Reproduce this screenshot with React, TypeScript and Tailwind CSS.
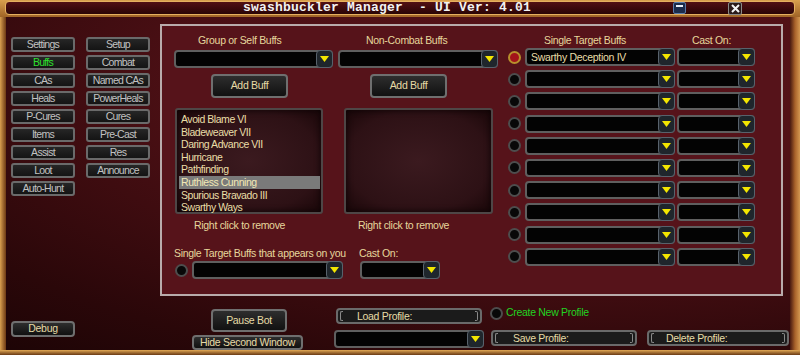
// Bot manager window — swashbuckler profile, Buffs tab
import React from "react";

const navLeft = ["Settings", "Buffs", "CAs", "Heals", "P-Cures", "Items", "Assist", "Loot", "Auto-Hunt"];
const navRight = ["Setup", "Combat", "Named CAs", "PowerHeals", "Cures", "Pre-Cast", "Res", "Announce"];

const groupBuffs = [
  "Avoid Blame VI",
  "Bladeweaver VII",
  "Daring Advance VII",
  "Hurricane",
  "Pathfinding",
  "Ruthless Cunning",
  "Spurious Bravado III",
  "Swarthy Ways",
];

const singleTargets = ["Swarthy Deception IV", "", "", "", "", "", "", "", "", ""];

const label = "text-[10.5px] leading-[12px] tracking-[-0.3px] text-[#e6d79c]";

function Tri() {
  return (
    <svg width="9" height="6" viewBox="0 0 9 6">
      <polygon points="0,0 9,0 4.5,6" fill="#f3e600" />
    </svg>
  );
}

function Drop({ className = "", text }: { className?: string; text?: string }) {
  return (
    <div className={`flex h-[18px] shrink-0 items-stretch rounded-[4px] border-2 border-[#5f5f5f] bg-[#030303] ${className}`}>
      <span className="flex-1 truncate pl-[4px] text-[10.5px] leading-[14px] tracking-[-0.3px] text-[#eadfa8]">{text}</span>
      <span className="-my-[2px] -mr-[2px] flex w-[17px] items-center justify-center rounded-[4px] border border-[#58626c] bg-[#1f262c]">
        <Tri />
      </span>
    </div>
  );
}

function Radio({ on }: { on?: boolean }) {
  return (
    <span
      className={`h-[13px] w-[13px] shrink-0 rounded-full border-2 ${
        on ? "border-[#b8902c] bg-[#a3141a]" : "border-[#4d4d4d] bg-[#080808]"
      }`}
    />
  );
}

function Btn({ className = "", children }: { className?: string; children: React.ReactNode }) {
  return (
    <div
      className={`flex shrink-0 items-center justify-center rounded-[4px] border-2 border-[#6f6f6f] bg-gradient-to-b from-[#2e2e2e] to-[#111111] text-[10.5px] tracking-[-0.3px] text-[#e6dba6] ${className}`}
    >
      {children}
    </div>
  );
}

function NavBtn({ label, active }: { label: string; active?: boolean }) {
  return (
    <div
      className={`flex h-[15px] items-center justify-center rounded-[3px] border-2 border-[#6a6a6a] bg-gradient-to-b from-[#262626] to-[#141414] text-[10.5px] tracking-[-0.7px] ${
        active ? "text-[#2ee02e]" : "text-[#c2c2c2]"
      }`}
    >
      {label}
    </div>
  );
}

function ProfileBtn({ className = "", label, pad }: { className?: string; label: string; pad: string }) {
  return (
    <div className={`flex h-[16px] shrink-0 items-stretch rounded-[4px] border-2 border-[#6a6a6a] bg-[#1b1b1b] ${className}`}>
      <span className="my-[1px] ml-[2px] w-[3px] rounded-l-[2px] border-y border-l border-[#8a8a8a]" />
      <span className={`flex-1 text-[10.5px] leading-[12px] tracking-[-0.3px] text-[#e6dba6] ${pad}`}>{label}</span>
      <span className="my-[1px] mr-[2px] w-[3px] rounded-r-[2px] border-y border-r border-[#8a8a8a]" />
    </div>
  );
}

function ListBox({ className = "", items, selected }: { className?: string; items: string[]; selected?: string }) {
  return (
    <div
      className={`h-[106px] shrink-0 rounded-[3px] border-2 border-[#4e4646] bg-[radial-gradient(ellipse_at_center,#3b1a1f_0%,#2d1115_70%,#1a0709_100%)] pl-[2px] pr-[1px] pt-[3px] shadow-[inset_0_0_6px_#0c0304] ${className}`}
    >
      {items.map((it) => (
        <div
          key={it}
          className={`h-[12.6px] pl-[2px] text-[10.5px] leading-[12.6px] tracking-[-0.45px] ${
            it === selected ? "bg-[#7a7a7a] text-[#f2e9b6]" : "text-[#eadfa8]"
          }`}
        >
          {it}
        </div>
      ))}
    </div>
  );
}

export default function App() {
  return (
    <div className="flex h-[355px] w-[800px] flex-col overflow-hidden bg-[#b57b32] [font-family:'Liberation_Sans',Arial,sans-serif]">
      {/* Title bar */}
      <div className="h-[17px] shrink-0 bg-gradient-to-b from-[#d9a04e] to-[#a06426] px-[5px] pb-[2px] pt-[1px]">
        <div className="flex h-[14px] items-center rounded-[4px] border border-[#e6b060] bg-gradient-to-b from-[#521014] to-[#2a0506] pl-[237px] pr-[52px]">
          <span className="whitespace-pre font-bold text-[13px] leading-[14px] tracking-[0.2px] text-[#f2f2f2] [font-family:'Liberation_Mono',monospace]">
            swashbuckler Manager  - UI Ver: 4.01
          </span>
          <span className="flex-1" />
          <span className="flex h-[12px] w-[13px] items-start justify-center rounded-[2px] border border-[#5a7aa8] bg-[#1c2c4c] pt-[2px]">
            <span className="h-[2px] w-[7px] bg-[#e8eef8]" />
          </span>
          <span className="ml-[42px] flex h-[13px] w-[14px] items-center justify-center rounded-[2px] border border-[#8a8a8a] bg-[#2a1a1a]">
            <svg width="9" height="9" viewBox="0 0 9 9">
              <path d="M1 1 L8 8 M8 1 L1 8" stroke="#f4f4f4" strokeWidth="2" />
            </svg>
          </span>
        </div>
      </div>

      {/* Middle */}
      <div className="flex min-h-0 flex-1">
        <div className="w-[6px] shrink-0 bg-gradient-to-r from-[#d9a050] to-[#6e3a14]" />

        <div className="flex min-w-0 flex-1 bg-[radial-gradient(ellipse_120%_110%_at_75%_20%,#5c141a_0%,#4a0f14_45%,#2a0709_80%,#1a0405_100%)]">
          {/* Left nav */}
          <div className="flex w-[154px] shrink-0 flex-col pb-[13px] pl-[5px] pt-[20px]">
            <div className="grid grid-cols-[64px_64px] grid-rows-[repeat(9,15px)] grid-flow-col gap-x-[11px] gap-y-[3px]">
              {navLeft.map((n) => (
                <NavBtn key={n} label={n} active={n === "Buffs"} />
              ))}
              {navRight.map((n) => (
                <NavBtn key={n} label={n} />
              ))}
            </div>
            <Btn className="mt-auto h-[16px] w-[64px] rounded-[3px]">Debug</Btn>
          </div>

          {/* Right side */}
          <div className="flex min-w-0 flex-1 flex-col">
            {/* Inner panel */}
            <div className="mt-[7px] flex h-[272px] w-[623px] shrink-0 border-2 border-[#b9abab] bg-[#56131a]">
              {/* Group / non-combat */}
              <div className="flex w-[338px] shrink-0 flex-col pl-[12px] pt-[8px]">
                <div className="flex gap-[5px]">
                  <div className="flex w-[159px] flex-col">
                    <div className={`h-[12px] pl-[24px] ${label}`}>Group or Self Buffs</div>
                    <Drop className="mt-[4px] w-[159px]" />
                    <Btn className="ml-[37px] mt-[6px] h-[24px] w-[77px]">Add Buff</Btn>
                    <ListBox className="ml-[1px] mt-[10px] w-[148px]" items={groupBuffs} selected="Ruthless Cunning" />
                    <div className={`mt-[5px] pl-[20px] ${label}`}>Right click to remove</div>
                  </div>
                  <div className="flex w-[160px] flex-col">
                    <div className={`h-[12px] pl-[28px] ${label}`}>Non-Combat Buffs</div>
                    <Drop className="mt-[4px] w-[160px]" />
                    <Btn className="ml-[32px] mt-[6px] h-[24px] w-[77px]">Add Buff</Btn>
                    <ListBox className="ml-[6px] mt-[10px] w-[149px]" items={[]} />
                    <div className={`mt-[5px] pl-[20px] ${label}`}>Right click to remove</div>
                  </div>
                </div>

                <div className="mt-[16px] flex">
                  <div className="flex w-[169px] flex-col">
                    <div className={`h-[12px] whitespace-nowrap ${label}`}>Single Target Buffs that appears on you</div>
                    <div className="mt-[2px] flex items-center">
                      <span className="ml-[1px] flex">
                        <Radio />
                      </span>
                      <Drop className="ml-[4px] w-[151px]" />
                    </div>
                  </div>
                  <div className="ml-[16px] flex flex-col">
                    <div className={`h-[12px] ${label}`}>Cast On:</div>
                    <Drop className="ml-[1px] mt-[2px] w-[80px]" />
                  </div>
                </div>
              </div>

              {/* Single target */}
              <div className="flex flex-1 flex-col pl-[8px] pt-[8px]">
                <div className={`flex h-[12px] ${label}`}>
                  <span className="w-[184px] pl-[36px]">Single Target Buffs</span>
                  <span>Cast On:</span>
                </div>
                <div className="mt-[2px] flex flex-col gap-[4.2px]">
                  {singleTargets.map((t, i) => (
                    <div key={i} className="flex items-center">
                      <Radio on={i === 0} />
                      <Drop className="ml-[4px] w-[150px]" text={t} />
                      <Drop className="ml-[2px] w-[78px]" />
                    </div>
                  ))}
                </div>
              </div>
            </div>

            {/* Bottom controls */}
            <div className="flex flex-1 items-start">
              <div className="ml-[32px] flex w-[111px] flex-col">
                <Btn className="ml-[19px] mt-[13px] h-[23px] w-[76px]">Pause Bot</Btn>
                <Btn className="mt-[3px] h-[15px] w-[111px] rounded-[3px]">Hide Second Window</Btn>
              </div>
              <div className="ml-[31px] flex w-[150px] flex-col">
                <ProfileBtn className="ml-[2px] mt-[12px] h-[15px] w-[146px]" label="Load Profile:" pad="pl-[14px]" />
                <Drop className="mt-[6px] w-[150px]" />
              </div>
              <div className="ml-[6px] flex flex-col">
                <div className="mt-[10px] flex h-[14px] items-center">
                  <Radio />
                  <span className="ml-[3px] text-[10.5px] tracking-[-0.3px] text-[#22d422]">Create New Profile</span>
                </div>
                <div className="mt-[10px] flex">
                  <ProfileBtn className="ml-[1px] w-[146px]" label="Save Profile:" pad="pl-[15px]" />
                  <ProfileBtn className="ml-[10px] w-[142px]" label="Delete Profile:" pad="pl-[12px]" />
                </div>
              </div>
            </div>
          </div>
        </div>

        <div className="w-[10px] shrink-0 bg-gradient-to-r from-[#4a1a10] via-[#a8622a] to-[#d49850]" />
      </div>

      <div className="h-[5px] shrink-0 bg-gradient-to-b from-[#e2aa56] to-[#6a3a14]" />
    </div>
  );
}
